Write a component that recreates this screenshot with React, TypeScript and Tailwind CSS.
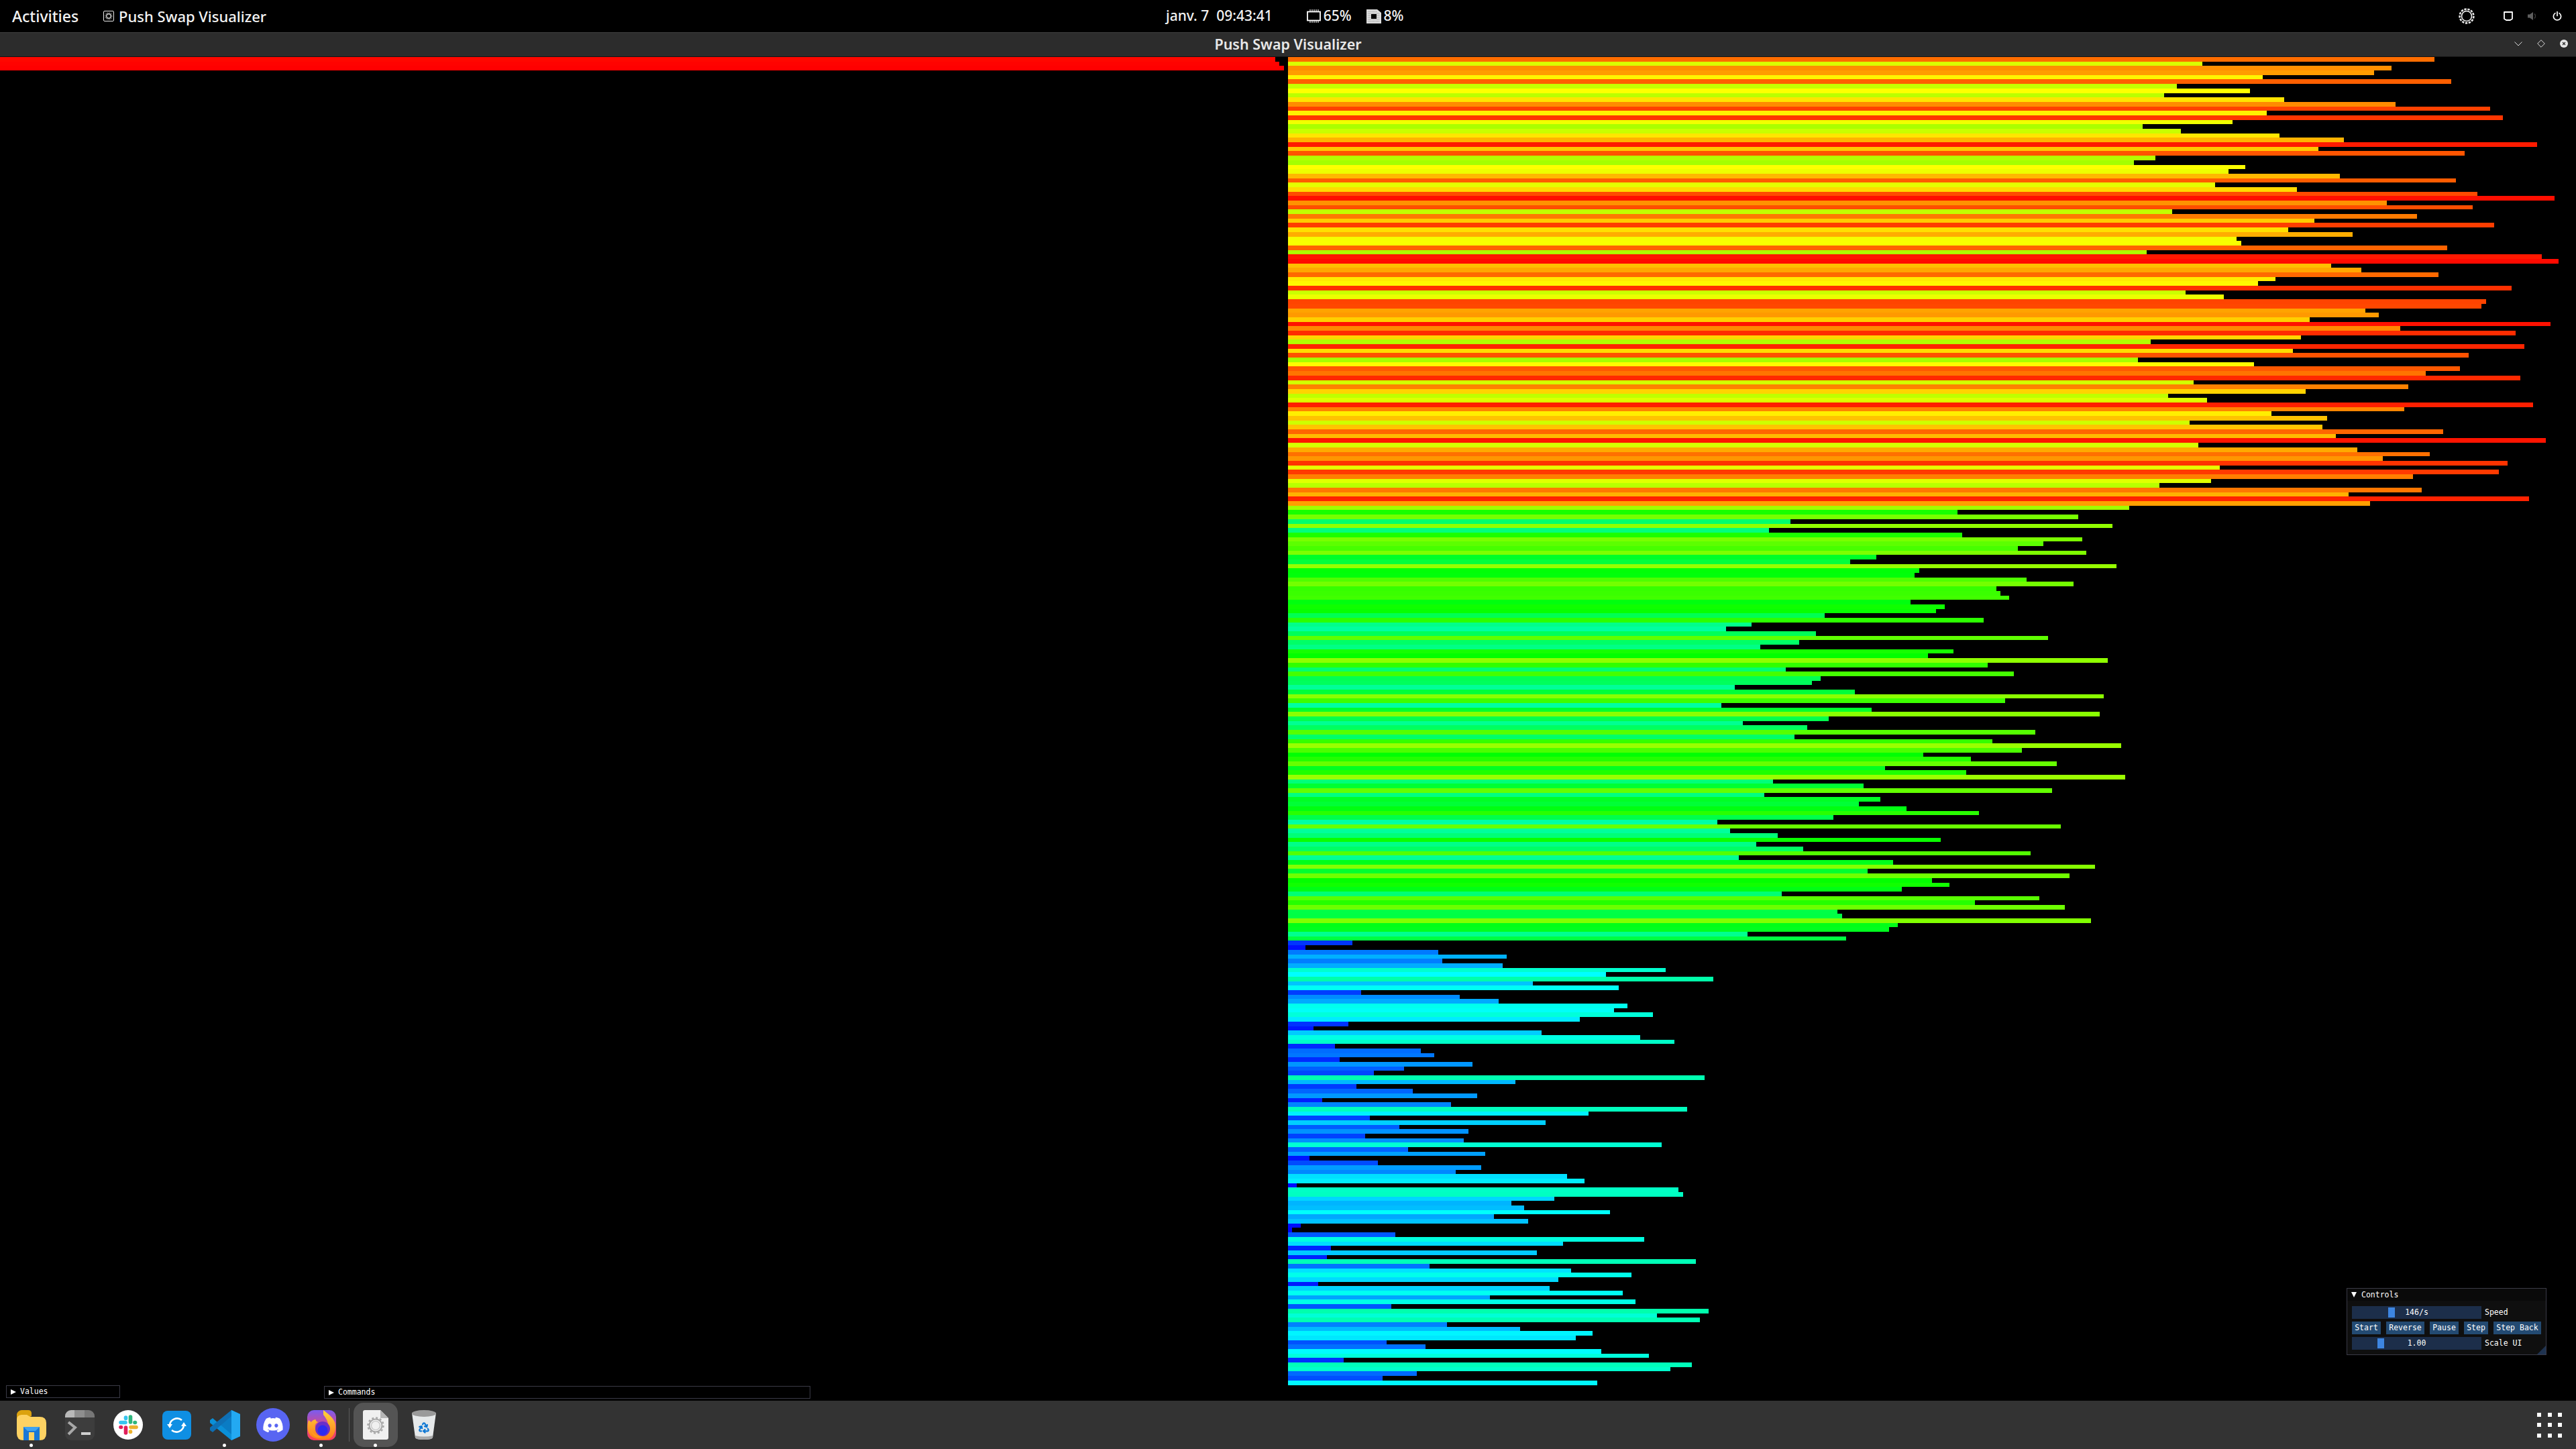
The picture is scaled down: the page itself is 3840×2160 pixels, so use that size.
import React from 'react';
import { FaDiscord } from 'react-icons/fa';
import { Recycle } from 'lucide-react';

// ranks 1..300, top to bottom, as they sit in each stack
const STACK_A = [298, 299, 300];
const STACK_B = [
  268, 214, 258, 254, 228, 272, 208, 225, 205, 233, 259, 281, 229, 284, 221, 200, 209, 232, 247, 292, 241, 275, 203, 198, 224,
  220, 246, 273, 217, 236, 278, 296, 257, 277, 207, 264, 240, 282, 234, 249, 222, 223, 271, 201, 293, 297, 244, 251, 269, 231,
  227, 286, 210, 219, 280, 279, 252, 255, 239, 295, 260, 287, 237, 202, 289, 235, 276, 199, 226, 274, 266, 288, 212, 262, 238,
  206, 215, 291, 261, 230, 243, 211, 242, 270, 245, 294, 213, 250, 267, 256, 285, 218, 283, 263, 216, 204, 265, 248, 290, 253,
  197, 157, 185, 118, 193, 113, 158, 186, 177, 171, 187, 138, 132, 194, 148, 147, 173, 184, 166, 167, 169, 146, 154, 152, 126,
  163, 109, 103, 124, 178, 120, 111, 156, 150, 192, 164, 117, 170, 125, 123, 105, 133, 191, 168, 102, 137, 190, 127, 107, 122,
  175, 119, 165, 195, 172, 149, 160, 180, 140, 159, 196, 114, 135, 179, 112, 139, 134, 145, 162, 128, 101, 181, 104, 115, 153,
  110, 121, 174, 106, 142, 189, 136, 183, 151, 155, 144, 116, 176, 161, 182, 129, 130, 188, 143, 141, 108, 131, 16, 5, 36,
  52, 37, 51, 89, 75, 100, 58, 78, 18, 41, 50, 80, 77, 86, 69, 15, 7, 60, 83, 91, 12, 32, 35, 13, 44,
  28, 21, 98, 54, 17, 30, 45, 9, 39, 94, 71, 20, 61, 27, 43, 19, 42, 88, 29, 47, 6, 22, 46, 40, 66,
  70, 3, 92, 93, 63, 53, 56, 76, 49, 57, 4, 2, 26, 84, 65, 11, 59, 10, 96, 34, 67, 81, 64, 8, 62,
  79, 48, 82, 25, 99, 87, 97, 38, 55, 72, 68, 24, 33, 74, 85, 14, 95, 90, 31, 23, 73, 1,
];

const Bar: React.FC<{ rank: number }> = ({ rank }) => (
  <div
    className="h-[6.7px]"
    style={{
      width: `${(rank - 1) * 6.4}px`,
      backgroundColor: `hsl(${240 * (1 - rank / 300)} 100% 50%)`,
    }}
  />
);

const ChipIcon = () => (
  <svg width="21" height="22" viewBox="0 0 21 22" fill="none" className="text-white">
    <rect x="1" y="4.5" width="19" height="13" stroke="currentColor" strokeWidth="1.8" />
    <path d="M5 1v3M8 1v3M11 1v3M14 1v3M17 1v3M5 18v3M8 18v3M11 18v3M14 18v3M17 18v3" stroke="currentColor" strokeWidth="1.1" />
  </svg>
);

const MemoryIcon = () => (
  <svg width="22" height="21" viewBox="0 0 22 21">
    <path d="M0 0h16l6 5v16H0z" fill="#dcdcdc" />
    <path d="M2 3h13M2 6h18M2 9h18M2 12h18M2 15h18M2 18h18" stroke="#777" strokeWidth="0.8" strokeDasharray="1 1" />
    <rect x="7" y="7" width="8" height="7" fill="#000" />
  </svg>
);

const TopBar = () => (
  <div className="relative flex h-[48px] shrink-0 items-center bg-black pl-[18px] pr-[21px] text-[22px] font-medium text-[#f2f2f2]">
    <span className="text-[23px]">Activities</span>
    <svg width="16" height="16" viewBox="0 0 16 16" fill="none" className="ml-[37px]">
      <rect x="0.5" y="0.5" width="15" height="15" rx="1.5" stroke="#e8e8e8" />
      <circle cx="8" cy="8" r="3.2" stroke="#cfcfcf" strokeWidth="1.4" />
      <circle cx="8" cy="8" r="5" stroke="#9a9a9a" strokeWidth="1.2" strokeDasharray="1.4 1.2" />
    </svg>
    <span className="ml-[7px]">Push Swap Visualizer</span>

    <div className="absolute left-[1738px] top-0 flex h-full items-center text-[21px]">
      <span className="whitespace-pre">janv. 7  09:43:41</span>
      <div className="ml-[51px] flex items-center gap-[4px]">
        <ChipIcon />
        <span>65%</span>
      </div>
      <div className="ml-[22px] flex items-center gap-[4px]">
        <MemoryIcon />
        <span>8%</span>
      </div>
    </div>

    <div className="ml-auto flex items-center">
      <svg width="24" height="24" viewBox="0 0 24 24" fill="none">
        <circle cx="12" cy="12" r="7.5" stroke="#f4f4f4" strokeWidth="1.6" />
        <circle cx="12" cy="12" r="10.4" stroke="#e8e8e8" strokeWidth="2.6" strokeDasharray="3.4 1.6" />
      </svg>
      <svg width="14" height="14" viewBox="0 0 14 14" fill="none" className="ml-[43px]">
        <path d="M1 1h12v10l-3 2H4L1 11z" stroke="#fff" strokeWidth="1.8" strokeLinejoin="round" />
      </svg>
      <svg width="14" height="14" viewBox="0 0 14 14" className="ml-[22px]">
        <path d="M0 4.5h3L8 1v12L3 9.5H0z" fill="#5d5d5d" />
        <path d="M10 3.5a5 5 0 0 1 0 7" stroke="#3c3c3c" strokeWidth="1.5" fill="none" />
      </svg>
      <svg width="14" height="14" viewBox="0 0 14 14" fill="none" className="ml-[23px]">
        <path d="M4 2.6a5.6 5.6 0 1 0 6 0M7 0.5v6" stroke="#fff" strokeWidth="1.7" strokeLinecap="round" />
      </svg>
    </div>
  </div>
);

const TitleBar = () => (
  <div className="relative flex h-[37px] shrink-0 items-center justify-center border-b border-t border-b-[#151515] border-t-[#3f3f3f] bg-[#2c2c2c] text-[21.5px] font-semibold text-[#e8e8e8]">
    <span>Push Swap Visualizer</span>
    <div className="absolute right-[12px] top-[10px] flex items-center gap-[22px]">
      <svg width="12" height="12" viewBox="0 0 12 12" fill="none">
        <path d="M0.5 3.5 6 9l5.5-5.5" stroke="#dcdcdc" />
      </svg>
      <svg width="12" height="12" viewBox="0 0 12 12" fill="none">
        <path d="M6 0.7 11.3 6 6 11.3 0.7 6z" stroke="#dcdcdc" />
      </svg>
      <svg width="12" height="12" viewBox="0 0 12 12">
        <circle cx="6" cy="6" r="6" fill="#e6e6e6" />
        <path d="M4 4l4 4M8 4l-4 4" stroke="#2c2c2c" strokeWidth="1.2" />
      </svg>
    </div>
  </div>
);

const Triangle: React.FC<{ open?: boolean }> = ({ open }) =>
  open ? (
    <div className="h-0 w-0 border-x-[4.5px] border-t-[8px] border-x-transparent border-t-white" />
  ) : (
    <div className="h-0 w-0 border-y-[4.5px] border-l-[8px] border-y-transparent border-l-white" />
  );

const Slider: React.FC<{ label: string; value: string; grab: number }> = ({ label, value, grab }) => (
  <div className="flex h-[19px] items-center">
    <div className="relative flex h-full w-[193px] items-center justify-center bg-[#1c2e4a]">
      <div className="absolute top-[2px] h-[15px] w-[10px] bg-[#3d85e0]" style={{ left: `${grab}px` }} />
      <span className="relative">{value}</span>
    </div>
    <span className="ml-[5px]">{label}</span>
  </div>
);

const ControlsWindow = () => (
  <div className="absolute left-[3498px] top-[1920px] h-[100px] w-[298px] border border-[#3a3a46] bg-[#0f0f0f] font-['DejaVu_Sans_Mono',monospace] text-[11.5px] leading-[19px] text-white">
    <div className="flex h-[18px] items-center gap-[7px] bg-[#0a0a0a] pl-[6px]">
      <Triangle open />
      <span>Controls</span>
    </div>
    <div className="flex flex-col gap-[4px] pl-[7px] pt-[8px]">
      <Slider label="Speed" value="146/s" grab={54} />
      <div className="flex h-[19px] gap-[8px]">
        <button className="w-[43px] bg-[#234a72] text-center">Start</button>
        <button className="w-[57px] bg-[#234a72] text-center">Reverse</button>
        <button className="w-[43px] bg-[#234a72] text-center">Pause</button>
        <button className="w-[36px] bg-[#234a72] text-center">Step</button>
        <button className="w-[71px] bg-[#234a72] text-center">Step Back</button>
      </div>
      <Slider label="Scale UI" value="1.00" grab={38} />
    </div>
    <div className="absolute bottom-0 right-0 h-0 w-0 border-b-[13px] border-l-[13px] border-b-[#1f3350] border-l-transparent" />
  </div>
);

const CollapsedWindow: React.FC<{ title: string; className: string }> = ({ title, className }) => (
  <div
    className={`absolute flex h-[19px] items-center gap-[6px] border border-[#3a3a46] bg-black pl-[6px] font-['DejaVu_Sans_Mono',monospace] text-[11.5px] text-white ${className}`}
  >
    <Triangle />
    <span>{title}</span>
  </div>
);

const FilesIcon = () => (
  <svg width="44" height="45" viewBox="0 0 44 45">
    <path d="M0 10a8 8 0 0 1 8-10h9a5 5 0 0 1 5 4v5L6 16H0z" fill="#dba20f" />
    <path d="M0 14q0-6 7-7l8 0 5 3h14q10 0 10 9v16q0 10-10 10H10Q0 45 0 35z" fill="#fdd263" />
    <path d="M10 25h24v20h-8V33h-8v12h-8z" fill="#1877d6" />
    <path d="M10 25h24l-6 6H16z" fill="#3fa3f0" />
  </svg>
);

const TerminalIcon = () => (
  <svg width="44" height="45" viewBox="0 0 44 45">
    <rect width="44" height="45" rx="9" fill="#3d3d3d" />
    <path d="M0 11V9a9 9 0 0 1 9-9h5v11z" fill="#b9b9b9" />
    <rect x="14" width="15" height="11" fill="#8e8e8e" />
    <path d="M29 0h6a9 9 0 0 1 9 9v2H29z" fill="#777" />
    <path d="M5 18l10 8-10 10" stroke="#a8a8a8" strokeWidth="4" fill="none" />
    <rect x="24" y="33" width="14" height="4" fill="#d0d0d0" />
  </svg>
);

const SlackIcon = () => (
  <svg width="44" height="44" viewBox="0 0 44 44">
    <circle cx="22" cy="22" r="22" fill="#fff" />
    <g strokeWidth="5.6" strokeLinecap="round" fill="none">
      <path d="M11 18.5h7" stroke="#36c5f0" />
      <path d="M18.5 11v1.5" stroke="#36c5f0" />
      <path d="M25.5 10v8" stroke="#2eb67d" />
      <path d="M32.5 18.5H32" stroke="#2eb67d" />
      <path d="M26 25.5h8" stroke="#ecb22e" />
      <path d="M25.5 32.5V32" stroke="#ecb22e" />
      <path d="M18.5 26v8" stroke="#e01e5a" />
      <path d="M11 25.5h.5" stroke="#e01e5a" />
    </g>
  </svg>
);

const SyncIcon = () => (
  <svg width="43" height="43" viewBox="0 0 43 43">
    <rect width="43" height="43" rx="8" fill="#0f8fe3" />
    <g stroke="#fff" strokeWidth="2.6" fill="none">
      <path d="M11 22a11 11 0 0 1 18-8" />
      <path d="M32 21a11 11 0 0 1-18 8" />
    </g>
    <path d="M7 20h8l-4 6zM28 23h8l-4-6z" fill="#fff" />
  </svg>
);

const CodeIcon = () => (
  <svg width="45" height="45" viewBox="0 0 45 45">
    <path d="M32 0 45 6v33l-13 6L12 25z" fill="#0a7cc4" />
    <path d="M32 0l13 6v33l-13 6z" fill="#23a9f2" />
    <path d="M0 15l4-3 28 24v9L0 19z" fill="#0a90d8" />
    <path d="M0 30l4 3 28-24V0L0 26z" fill="#0e6fb4" />
  </svg>
);

const DiscordIcon = () => (
  <div className="flex h-[50px] w-[50px] items-center justify-center rounded-full bg-[#5865f2]">
    <FaDiscord className="h-[32px] w-[32px] text-white" />
  </div>
);

const FirefoxIcon = () => (
  <svg width="43" height="45" viewBox="0 0 43 45">
    <defs>
      <linearGradient id="ffbase" x1="0" y1="0" x2="0" y2="1">
        <stop offset="0" stopColor="#7a5cf0" />
        <stop offset="0.45" stopColor="#c94a9a" />
        <stop offset="1" stopColor="#ff3f56" />
      </linearGradient>
      <linearGradient id="ffflame" x1="0" y1="0" x2="0" y2="1">
        <stop offset="0" stopColor="#ffd53d" />
        <stop offset="1" stopColor="#ff7a1a" />
      </linearGradient>
    </defs>
    <rect width="43" height="45" rx="10" fill="url(#ffbase)" />
    <path d="M24 0c6 5 13 9 17 18 3 10 0 20-8 25-7 2-20 2-27-4C0 34-1 24 2 15l4 3c2-3 4-4 7-4-1 2 1 3 3 4-6 3-5 8-2 11 4 4 13 3 16-3 3-7-2-14-6-19 0-2 0-4 0-7z" fill="url(#ffflame)" />
    <circle cx="23" cy="28" r="11" fill="#6a2fc9" />
    <circle cx="23" cy="30" r="7.5" fill="#2c2cf0" />
    <path d="M4 26c3 9 11 14 20 13-8 5-18 1-20-13z" fill="#ff9a1f" />
  </svg>
);

const SettingsFileIcon = () => (
  <svg width="38" height="44" viewBox="0 0 38 44">
    <path d="M3 0h23l12 12v29a3 3 0 0 1-3 3H3a3 3 0 0 1-3-3V3a3 3 0 0 1 3-3z" fill="#f0f0f0" />
    <path d="M26 0l12 12H26z" fill="#b5b5b5" />
    <circle cx="19" cy="23" r="6.5" fill="none" stroke="#c2c2c2" strokeWidth="1.2" />
    <circle cx="19" cy="23" r="9.5" fill="none" stroke="#a8a8a8" strokeWidth="2" />
    <circle cx="19" cy="23" r="11.5" fill="none" stroke="#a8a8a8" strokeWidth="2.4" strokeDasharray="3 3" />
  </svg>
);

const TrashIcon = () => (
  <div className="relative h-[44px] w-[36px]">
    <svg width="36" height="44" viewBox="0 0 36 44" className="absolute inset-0">
      <path d="M0 4l5 37q1 3 13 3t13-3l5-37z" fill="#e6e9ea" />
      <ellipse cx="18" cy="5" rx="18" ry="5" fill="#9a9a9a" />
      <path d="M5 41q1 3 13 3t13-3l.4-3q-13 3-26.8 0z" fill="#a8a8a8" />
    </svg>
    <Recycle className="absolute left-[9px] top-[17px] h-[18px] w-[18px] text-[#0f78d4]" strokeWidth={3} />
  </div>
);

const DockItem: React.FC<{ active?: boolean; running?: boolean; children: React.ReactNode }> = ({ active, running, children }) => (
  <div className="relative flex h-full w-[72px] shrink-0 items-center justify-center">
    {active && <div className="absolute left-[3px] top-[3px] h-[66px] w-[66px] rounded-[15px] bg-[#545454]" />}
    <div className="relative">{children}</div>
    {running && <div className="absolute bottom-[3px] left-[33px] h-[5px] w-[5px] rounded-full bg-white" />}
  </div>
);

const Dock = () => (
  <div className="relative z-10 flex h-[72px] shrink-0 items-center bg-[#333333] pl-[11px] pr-[21px]">
    <DockItem running><FilesIcon /></DockItem>
    <DockItem><TerminalIcon /></DockItem>
    <DockItem><SlackIcon /></DockItem>
    <DockItem><SyncIcon /></DockItem>
    <DockItem running><CodeIcon /></DockItem>
    <DockItem><DiscordIcon /></DockItem>
    <DockItem running><FirefoxIcon /></DockItem>
    <div className="ml-[5px] mr-[3px] h-[50px] w-px bg-[#5a5a5a]" />
    <DockItem active running><SettingsFileIcon /></DockItem>
    <DockItem><TrashIcon /></DockItem>
    <div className="ml-auto grid grid-cols-3 gap-[9.5px]">
      {Array.from({ length: 9 }).map((_, i) => (
        <div key={i} className="h-[6px] w-[6px] bg-white" />
      ))}
    </div>
  </div>
);

export default function App() {
  return (
    <div className="relative flex h-[2160px] w-[3840px] flex-col overflow-hidden bg-black font-['Noto_Sans',sans-serif]">
      <TopBar />
      <TitleBar />
      <div className="flex min-h-0 flex-1 overflow-hidden">
        <div className="flex w-[1920px] flex-col">
          {STACK_A.map((rank) => (
            <Bar key={rank} rank={rank} />
          ))}
        </div>
        <div className="flex w-[1920px] flex-col">
          {STACK_B.map((rank) => (
            <Bar key={rank} rank={rank} />
          ))}
        </div>
      </div>
      <CollapsedWindow title="Values" className="left-[9px] top-[2065px] w-[170px]" />
      <CollapsedWindow title="Commands" className="left-[483px] top-[2066px] w-[725px]" />
      <ControlsWindow />
      <Dock />
    </div>
  );
}
